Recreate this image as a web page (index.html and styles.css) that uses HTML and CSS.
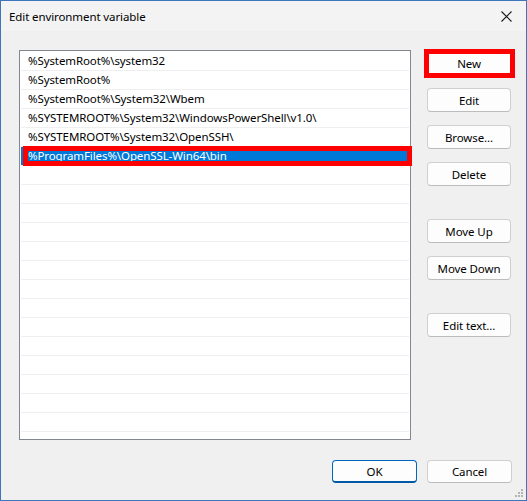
FILE: index.html
```html
<!DOCTYPE html>
<html lang="en">
<head>
    <meta charset="UTF-8">
    <meta name="viewport" content="width=device-width, initial-scale=1.0">
    <title>Edit environment variable</title>
    <link rel="stylesheet" href="styles.css">
</head>
<body>
    <div class="window">
        <!-- Title bar -->
        <div class="titlebar">
            <span class="title">Edit environment variable</span>
            <span class="close">
                <svg width="11" height="11" viewBox="0 0 11 11">
                    <path d="M0.5 0.5 L10.5 10.5 M10.5 0.5 L0.5 10.5" stroke="#1a1a1a" stroke-width="1.1" fill="none"/>
                </svg>
            </span>
        </div>

        <div class="content">
            <div class="main">
                <!-- Path list -->
                <div class="list">
                    <div class="rows">
                        <div class="row">%SystemRoot%\system32</div>
                        <div class="row">%SystemRoot%</div>
                        <div class="row">%SystemRoot%\System32\Wbem</div>
                        <div class="row">%SYSTEMROOT%\System32\WindowsPowerShell\v1.0\</div>
                        <div class="row">%SYSTEMROOT%\System32\OpenSSH\</div>
                        <div class="row selected">%ProgramFiles%\OpenSSL-Win64\bin</div>
                        <div class="row"></div>
                        <div class="row"></div>
                        <div class="row"></div>
                        <div class="row"></div>
                        <div class="row"></div>
                        <div class="row"></div>
                        <div class="row"></div>
                        <div class="row"></div>
                        <div class="row"></div>
                        <div class="row"></div>
                        <div class="row"></div>
                        <div class="row"></div>
                        <div class="row"></div>
                        <div class="row"></div>
                        <div class="row"></div>
                    </div>
                    <div class="mark row-mark"></div>
                </div>

                <!-- Side buttons -->
                <div class="side">
                    <div class="btn-wrap">
                        <button class="btn">New</button>
                        <div class="mark btn-mark"></div>
                    </div>
                    <button class="btn">Edit</button>
                    <button class="btn">Browse...</button>
                    <button class="btn">Delete</button>
                    <button class="btn group">Move Up</button>
                    <button class="btn">Move Down</button>
                    <button class="btn group">Edit text...</button>
                </div>
            </div>

            <div class="footer">
                <button class="btn default">OK</button>
                <button class="btn">Cancel</button>
            </div>
        </div>

        <svg class="grip" width="9" height="9" viewBox="0 0 9 9">
            <rect x="6" y="0" width="2" height="2" fill="#b4b4b4"/>
            <rect x="3" y="3" width="2" height="2" fill="#b4b4b4"/>
            <rect x="6" y="3" width="2" height="2" fill="#b4b4b4"/>
            <rect x="0" y="6" width="2" height="2" fill="#b4b4b4"/>
            <rect x="3" y="6" width="2" height="2" fill="#b4b4b4"/>
            <rect x="6" y="6" width="2" height="2" fill="#b4b4b4"/>
        </svg>
    </div>
</body>
</html>
```

FILE: styles.css
```css
* {
    box-sizing: border-box;
}
body {
    margin: 0;
    font-family: "Noto Sans", "Open Sans", sans-serif;
    font-size: 11.5px;
    letter-spacing: -0.1px;
    color: #000;
}
.window {
    position: relative;
    width: 527px;
    height: 501px;
    border: 1px solid #3d76bd;
    background-color: #f0f0f0;
    display: flex;
    flex-direction: column;
}
.titlebar {
    height: 30px;
    background-color: #f3f3f3;
    display: flex;
    align-items: center;
    justify-content: space-between;
    padding: 0 14px 0 8px;
}
.close {
    display: flex;
    align-items: center;
}
.content {
    padding: 19px 14px 0 18px;
}
.main {
    display: flex;
    gap: 16px;
}
.list {
    position: relative;
    width: 392px;
    height: 390px;
    border: 1px solid #828790;
    background-color: #fff;
}
.rows {
    height: 100%;
    overflow: hidden;
    padding: 1px 1px 0 1px;
}
.row {
    height: 19px;
    line-height: 18px;
    border-bottom: 1px solid #efefef;
    padding-left: 7px;
    white-space: nowrap;
}
.row.selected {
    background-color: #0078d7;
    color: #fff;
}
.mark {
    position: absolute;
    border: 5px solid #ff0000;
}
.row-mark {
    top: 95px;
    left: 3px;
    width: 389px;
    height: 20px;
}
.side {
    display: flex;
    flex-direction: column;
    gap: 13px;
    padding-top: 1px;
}
.btn-wrap {
    position: relative;
}
.btn-mark {
    top: -2px;
    left: -3px;
    width: 91px;
    height: 29px;
}
.btn {
    display: block;
    width: 84px;
    height: 24px;
    padding: 0;
    font-family: inherit;
    font-size: 11.5px;
    letter-spacing: -0.1px;
    color: #000;
    background-color: #fdfdfd;
    border: 1px solid #d0d0d0;
    border-bottom-color: #bcbcbc;
    border-radius: 4px;
}
.btn.group {
    margin-top: 20px;
}
.btn.default {
    border: 1px solid #0067c0;
    border-bottom: 2px solid #0058a8;
}
.footer {
    display: flex;
    justify-content: flex-end;
    gap: 10px;
    margin-top: 20px;
}
.footer .btn {
    width: 85px;
    height: 23px;
}
.grip {
    position: absolute;
    right: 2px;
    bottom: 2px;
}
```
